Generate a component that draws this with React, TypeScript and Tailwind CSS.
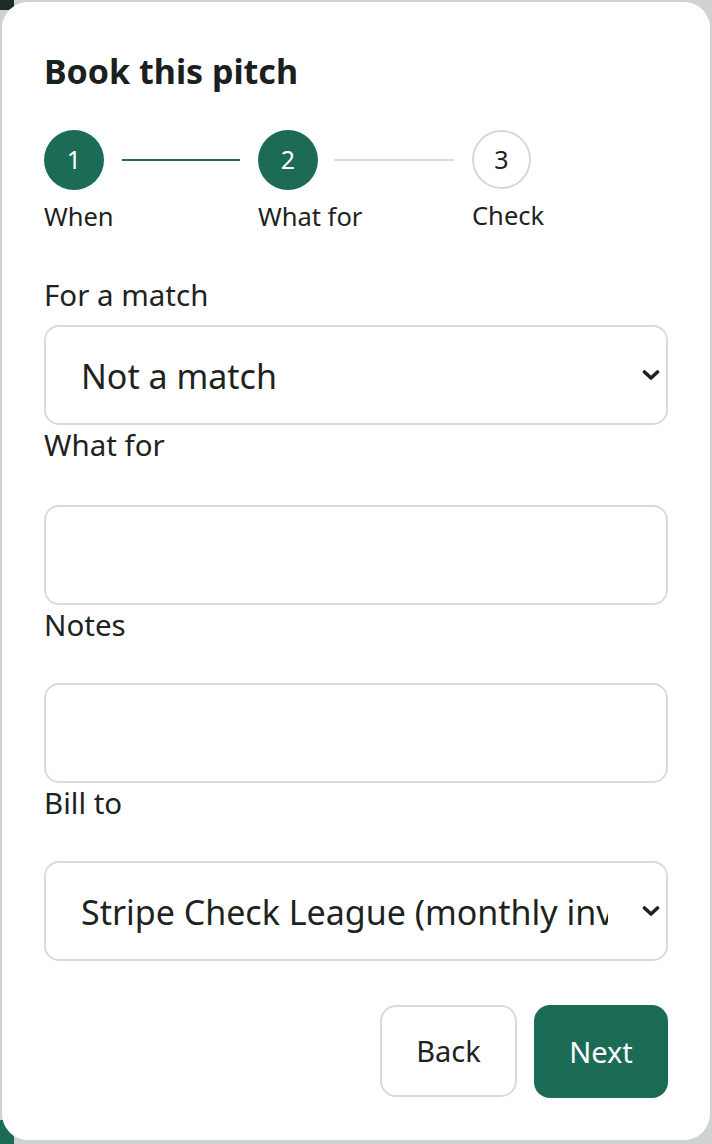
import { ReactNode } from "react";

const font = { fontFamily: '"Noto Sans", "Open Sans", sans-serif' };

function Chevron() {
  return (
    <svg
      viewBox="0 0 18 11"
      className="pointer-events-none absolute right-[8px] top-1/2 h-[11px] w-[18px] -translate-y-1/2"
      fill="none"
      stroke="#1c2320"
      strokeWidth="3.6"
      strokeLinecap="round"
      strokeLinejoin="round"
    >
      <path d="M2.5 2.5 9 8.5l6.5-6" />
    </svg>
  );
}

type StepProps = {
  n: number;
  label: string;
  state: "done" | "current" | "todo";
  line?: "done" | "todo";
};

function Step({ n, label, state, line }: StepProps) {
  const filled = state !== "todo";
  return (
    <div className="flex w-[214px] shrink-0 flex-col">
      <div className="flex items-center">
        <div
          className={
            filled
              ? "flex size-[60px] shrink-0 items-center justify-center rounded-full bg-[#1b6b57] text-[25px] text-white"
              : "flex size-[59px] shrink-0 items-center justify-center rounded-full border-2 border-[#d6d8d7] bg-white text-[25px] text-[#1c2320]"
          }
        >
          {n}
        </div>
        {line ? (
          <div
            className={
              line === "done"
                ? "ml-[18px] h-[2px] w-[118px] bg-[#1b6b57]"
                : "ml-[16px] h-[2px] w-[120px] bg-[#d9dbda]"
            }
          />
        ) : null}
      </div>
      <div className="mt-[10px] text-[25.5px] leading-[32px] text-[#1c2320]">{label}</div>
    </div>
  );
}

function Field({ label, gap, children }: { label: string; gap: string; children: ReactNode }) {
  return (
    <div className="flex flex-col">
      <label className={`text-[29.5px] leading-[40px] text-[#1c2320] ${gap}`}>{label}</label>
      {children}
    </div>
  );
}

const boxClass =
  "h-[100px] w-full rounded-[15px] border-2 border-[#d9dbda] bg-white px-[35px] text-[34px] text-[#1c2320] outline-none";

function Select({ value }: { value: string }) {
  return (
    <div className="relative">
      <div className={`${boxClass} flex items-center overflow-hidden whitespace-nowrap pt-[3px] pr-[58px]`}>
        <span className="block overflow-hidden">{value}</span>
      </div>
      <Chevron />
    </div>
  );
}

export default function App() {
  return (
    <div className="relative min-h-[1144px] w-full overflow-hidden bg-[#d0d2d1]" style={font}>
      <div className="absolute left-0 top-0 h-[10px] w-[14px] bg-[#1e2a26]" />
      <div className="absolute bottom-0 left-0 h-[24px] w-[14px] bg-[#1b6b57]" />
      <div className="relative mx-[2px] mt-[2px] h-[1138px] rounded-[26px] bg-white px-[42px] pt-[47px]">
        <h2 className="text-[34px] font-bold leading-[44px] text-[#1a201d]">Book this pitch</h2>

        <div className="mt-[37px] flex">
          <Step n={1} label="When" state="done" line="done" />
          <Step n={2} label="What for" state="current" line="todo" />
          <Step n={3} label="Check" state="todo" />
        </div>

        <div className="mt-[43px] flex flex-col">
          <Field label="For a match" gap="mb-[10px]">
            <Select value="Not a match" />
          </Field>
          <Field label="What for" gap="mb-[40px]">
            <input className={boxClass} />
          </Field>
          <Field label="Notes" gap="mb-[38px]">
            <input className={boxClass} />
          </Field>
          <Field label="Bill to" gap="mb-[38px]">
            <Select value="Stripe Check League (monthly invoice)" />
          </Field>
        </div>

        <div className="mt-[44px] flex justify-end gap-[17px]">
          <button className="h-[92px] w-[137px] rounded-[16px] border-2 border-[#d9dbda] bg-white text-[29px] text-[#1c2320]">
            Back
          </button>
          <button className="h-[93px] w-[134px] rounded-[16px] bg-[#1b6b57] text-[29px] text-white">
            Next
          </button>
        </div>
      </div>
    </div>
  );
}
